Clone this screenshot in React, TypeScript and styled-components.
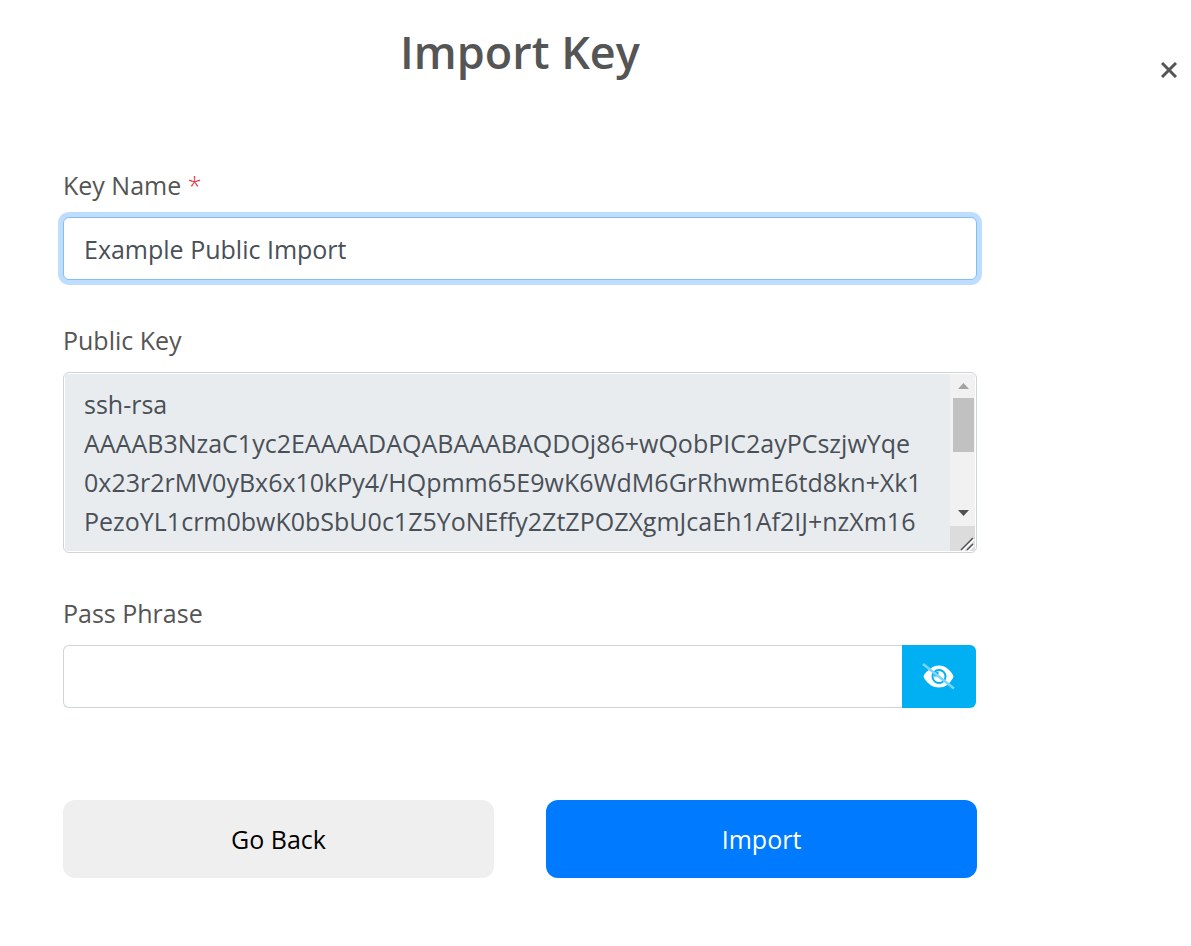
import React, { useState } from "react";
import styled, { createGlobalStyle } from "styled-components";

const GlobalStyle = createGlobalStyle`
  *, *::before, *::after { box-sizing: border-box; }
  body { margin: 0; background: #fff; }
  body, input, textarea, button {
    font-family: "Segoe UI", "Open Sans", "Noto Sans", sans-serif;
    font-size: 25px;
    line-height: 39px;
  }
`;

const Dialog = styled.main`
  padding: 19px 0 68px 63px;
  color: #555;
`;

const Header = styled.header`
  display: flex;
  align-items: center;
  margin-bottom: 81px;
`;

const Title = styled.h1`
  flex: 1;
  margin: 0;
  text-align: center;
  font-size: 45px;
  font-weight: 600;
  line-height: 66px;
`;

const CloseArea = styled.div`
  display: flex;
  justify-content: flex-end;
  width: 214px;
  padding: 36px 8px 0 0;
`;

const CloseButton = styled.button`
  display: flex;
  padding: 6px;
  border: 0;
  background: none;
  color: #555;
  cursor: pointer;
`;

const Form = styled.form`
  margin-right: 214px;
`;

const Field = styled.div`
  margin-bottom: 41px;
`;

const Label = styled.label`
  display: block;
  height: 39px;
  margin-bottom: 12px;
`;

const Required = styled.span`
  color: #dc3545;
  font-weight: 300;
`;

const TextInput = styled.input<{ $attached?: boolean }>`
  display: block;
  flex: 1;
  width: 100%;
  min-width: 0;
  height: 63px;
  padding: 0 20px;
  border: 1px solid #ced4da;
  border-right-width: ${(p) => (p.$attached ? 0 : 1)}px;
  border-radius: ${(p) => (p.$attached ? "6px 0 0 6px" : "6px")};
  background: #fff;
  color: #495057;
  outline: 0;
`;

const ActiveInput = styled(TextInput)`
  border-color: #80bdff;
  box-shadow: 0 0 0 5px #bfdeff;
`;

const KeyBox = styled.div`
  display: flex;
  height: 181px;
  padding: 1px;
  border: 1px solid #ced4da;
  border-radius: 6px;
  overflow: hidden;
`;

const KeyText = styled.textarea`
  flex: 1;
  min-width: 0;
  padding: 11px 0 0 19px;
  border: 0;
  background: #e9ecef;
  color: #495057;
  white-space: pre;
  overflow: hidden;
  resize: none;
  outline: 0;
`;

const ScrollBar = styled.div`
  display: flex;
  flex-direction: column;
  width: 25px;
  background: #f1f1f1;
`;

const ScrollArrow = styled.svg`
  display: block;
  width: 25px;
  height: 24px;
`;

const Thumb = styled.div`
  width: 21px;
  height: 54px;
  margin: 0 1px auto 3px;
  background: #c1c1c1;
`;

const ResizeCorner = styled.svg`
  display: block;
  width: 25px;
  height: 25px;
  background: #dcdcdc;
`;

const InputGroup = styled.div`
  display: flex;
  padding-right: 1px;
`;

const RevealButton = styled.button`
  display: flex;
  align-items: center;
  justify-content: center;
  width: 74px;
  padding: 0;
  border: 0;
  border-radius: 0 6px 6px 0;
  background: #00b0f3;
  color: #fff;
  cursor: pointer;
`;

const Actions = styled.div`
  display: grid;
  grid-template-columns: 1fr 1fr;
  gap: 52px;
  margin-top: 92px;
`;

const ActionButton = styled.button<{ $primary?: boolean }>`
  height: 78px;
  padding: 0;
  border: 0;
  border-radius: 12px;
  background: ${(p) => (p.$primary ? "#007bff" : "#efefef")};
  color: ${(p) => (p.$primary ? "#fff" : "#000")};
  cursor: pointer;
`;

const publicKey = [
  "ssh-rsa",
  "AAAAB3NzaC1yc2EAAAADAQABAAABAQDOj86+wQobPIC2ayPCszjwYqe",
  "0x23r2rMV0yBx6x10kPy4/HQpmm65E9wK6WdM6GrRhwmE6td8kn+Xk1",
  "PezoYL1crm0bwK0bSbU0c1Z5YoNEffy2ZtZPOZXgmJcaEh1Af2IJ+nzXm16",
].join("\n");

export default function App() {
  const [name, setName] = useState("Example Public Import");
  const [phrase, setPhrase] = useState("");
  const [visible, setVisible] = useState(false);

  return (
    <>
      <GlobalStyle />
      <Dialog>
        <Header>
          <Title>Import Key</Title>
          <CloseArea>
            <CloseButton type="button" aria-label="Close">
              <svg width="16" height="16" viewBox="0 0 16 16" fill="none" stroke="currentColor" strokeWidth="3">
                <path d="M1 1L15 15M15 1L1 15" />
              </svg>
            </CloseButton>
          </CloseArea>
        </Header>
        <Form onSubmit={(e) => e.preventDefault()}>
          <Field>
            <Label htmlFor="key-name">
              Key Name <Required>*</Required>
            </Label>
            <ActiveInput id="key-name" required value={name} onChange={(e) => setName(e.target.value)} />
          </Field>
          <Field>
            <Label htmlFor="public-key">Public Key</Label>
            <KeyBox>
              <KeyText id="public-key" readOnly value={publicKey} />
              <ScrollBar aria-hidden="true">
                <ScrollArrow viewBox="0 0 25 24">
                  <path d="M8 15L13.500 9L19 15Z" fill="#a3a3a3" />
                </ScrollArrow>
                <Thumb />
                <ScrollArrow viewBox="0 0 25 24">
                  <path d="M8 8L13.500 14L19 8Z" fill="#505050" />
                </ScrollArrow>
                <ResizeCorner viewBox="0 0 25 25">
                  <path d="M11 24L23 12M17 24L23 18" stroke="#fff" strokeWidth="2" transform="translate(1 1)" />
                  <path d="M11 24L23 12M17 24L23 18" stroke="#505050" strokeWidth="1.5" />
                </ResizeCorner>
              </ScrollBar>
            </KeyBox>
          </Field>
          <Field>
            <Label htmlFor="pass-phrase">Pass Phrase</Label>
            <InputGroup>
              <TextInput
                id="pass-phrase"
                $attached
                type={visible ? "text" : "password"}
                value={phrase}
                onChange={(e) => setPhrase(e.target.value)}
              />
              <RevealButton type="button" aria-label="Show pass phrase" onClick={() => setVisible(!visible)}>
                <svg width="34" height="28" viewBox="0 0 34 28" fill="none">
                  <path
                    fill="currentColor"
                    d="M17 2.500C12 2.500 6 5.500 2 12C1.500 13 1.500 14 2 15C6 21.500 11 24.500 17 24.500S27 21.500 31 15C31.500 14 31.500 13 31 12C27 5.500 22 2.500 17 2.500Z"
                  />
                  <circle cx="17" cy="13.500" r="6.500" stroke="#00b0f3" strokeWidth="2" />
                  <path d="M16.500 8.500V13.500H12A5 5 0 0 1 16.500 8.500Z" fill="#00b0f3" />
                  <path d="M0 0H9L10 4.500L5 8.500L0 5Z" fill="#00b0f3" />
                  <path d="M1 1L32 25.500" stroke="#79d5f9" strokeWidth="2.500" />
                </svg>
              </RevealButton>
            </InputGroup>
          </Field>
          <Actions>
            <ActionButton type="button">Go Back</ActionButton>
            <ActionButton type="submit" $primary>
              Import
            </ActionButton>
          </Actions>
        </Form>
      </Dialog>
    </>
  );
}
